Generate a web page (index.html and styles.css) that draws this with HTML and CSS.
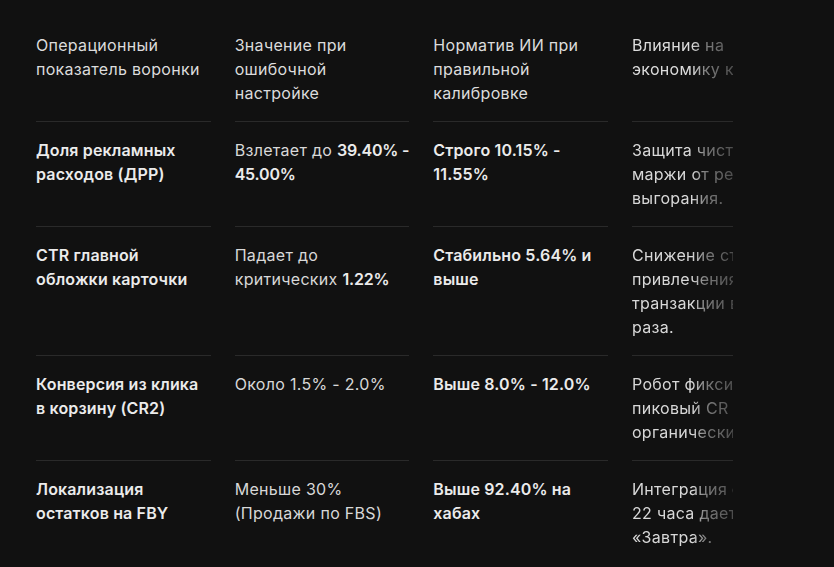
FILE: index.html
```html
<!DOCTYPE html>
<html lang="ru">
<head>
<meta charset="utf-8">
<title>Операционные показатели воронки</title>
<link rel="stylesheet" href="styles.css">
</head>
<body>
<div class="page">
  <div class="scroller">
    <div class="grid" role="table">
      <div class="cell head">Операционный показатель воронки</div>
      <div class="cell head">Значение при ошибочной настройке</div>
      <div class="cell head">Норматив ИИ при правильной калибровке</div>
      <div class="cell head fade"><span class="fade-text">Влияние на<br>экономику карточки</span></div>

      <div class="cell strong">Доля рекламных расходов (ДРР)</div>
      <div class="cell">Взлетает до <b>39.40% - 45.00%</b></div>
      <div class="cell strong">Строго 10.15% - 11.55%</div>
      <div class="cell fade"><span class="fade-text">Защита чистой<br>маржи от рекламного<br>выгорания.</span></div>

      <div class="cell strong">CTR главной обложки карточки</div>
      <div class="cell">Падает до критических <b>1.22%</b></div>
      <div class="cell strong">Стабильно 5.64% и выше</div>
      <div class="cell fade"><span class="fade-text">Снижение стоимости<br>привлечения одной<br>транзакции в 3<br>раза.</span></div>

      <div class="cell strong">Конверсия из клика в корзину (CR2)</div>
      <div class="cell">Около 1.5% - 2.0%</div>
      <div class="cell strong">Выше 8.0% - 12.0%</div>
      <div class="cell fade"><span class="fade-text">Робот фиксирует<br>пиковый CR и<br>органический рост.</span></div>

      <div class="cell strong last">Локализация остатков на FBY</div>
      <div class="cell last">Меньше 30% (Продажи по FBS)</div>
      <div class="cell strong last">Выше 92.40% на хабах</div>
      <div class="cell fade last"><span class="fade-text">Интеграция с<br>22 часа дает<br>«Завтра».</span></div>
    </div>
  </div>
</div>
</body>
</html>
```

FILE: styles.css
```css
html, body {
  margin: 0;
  padding: 0;
  background: #111111;
}

body {
  font-family: "Inter", "Noto Sans", "Liberation Sans", sans-serif;
  font-size: 16px;
  line-height: 24px;
  color: #dadada;
}

.page {
  padding: 17px 0 0 36px;
}

.scroller {
  width: 697px;
  overflow: hidden;
}

.grid {
  display: grid;
  grid-template-columns: repeat(4, 174.67px);
  column-gap: 24px;
  width: max-content;
}

.cell {
  padding: 16px 0;
  border-bottom: 1px solid #2a2a2a;
  color: #d8d8d8;
  font-weight: 400;
  letter-spacing: 0.3px;
}

.cell.last {
  border-bottom: none;
}

.cell.strong {
  font-weight: 600;
  color: #ebebeb;
  letter-spacing: 0.15px;
}

.cell b {
  font-weight: 600;
  color: #ebebeb;
  letter-spacing: -0.2px;
}

.head {
  color: #dcdcdc;
}

.fade {
  white-space: nowrap;
}

.fade-text {
  display: block;
  -webkit-mask-image: linear-gradient(to right, #000 0, #000 60px, rgba(0,0,0,0.55) 73px, rgba(0,0,0,0.3) 101px, rgba(0,0,0,0.3) 100%);
  mask-image: linear-gradient(to right, #000 0, #000 60px, rgba(0,0,0,0.55) 73px, rgba(0,0,0,0.3) 101px, rgba(0,0,0,0.3) 100%);
}
```
